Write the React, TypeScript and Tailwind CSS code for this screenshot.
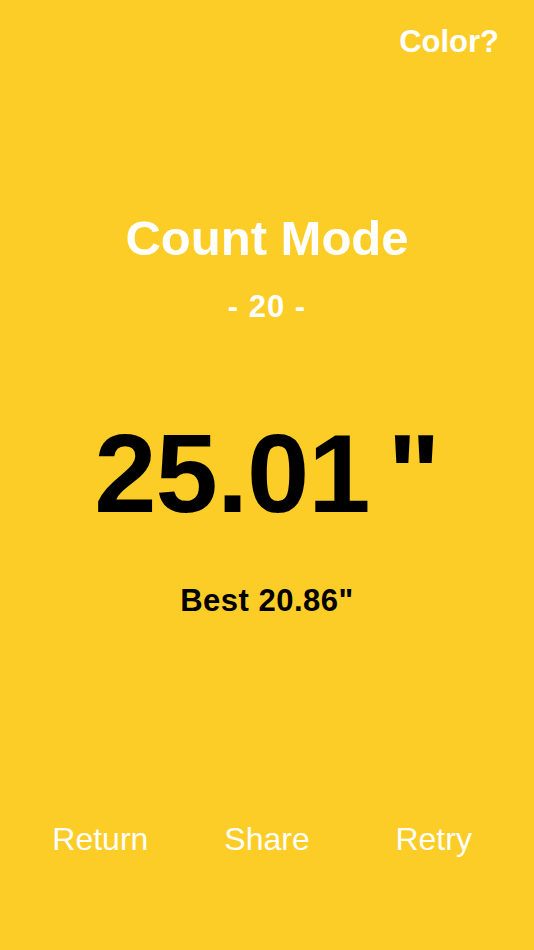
export default function App() {
  return (
    <div
      className="flex h-[950px] w-full flex-col bg-[#fccd27] text-white"
      style={{fontFamily: '"Liberation Sans", Arial, sans-serif'}}
    >
      {/* top right toggle */}
      <div className="flex justify-end pt-[26px] pr-[35px]">
        <button className="text-[31px] font-bold leading-none text-white">Color?</button>
      </div>

      <h1 className="mt-[157px] text-center text-[49px] font-bold leading-none">Count Mode</h1>
      <div className="mt-[28px] text-center text-[31px] font-bold leading-none tracking-[1px]">- 20 -</div>

      <div className="mt-[96px] text-center text-[112px] font-bold leading-none tracking-[-1px] text-black">
        25.01<span className="ml-[18px]">"</span>
      </div>

      <div className="mt-[55px] text-center text-[31px] font-bold leading-none tracking-[0.5px] text-black">
        Best 20.86"
      </div>

      <div className="mt-[207px] grid grid-cols-3 px-[17px] text-center text-[32px] leading-none">
        <button>Return</button>
        <button>Share</button>
        <button>Retry</button>
      </div>
    </div>
  );
}
